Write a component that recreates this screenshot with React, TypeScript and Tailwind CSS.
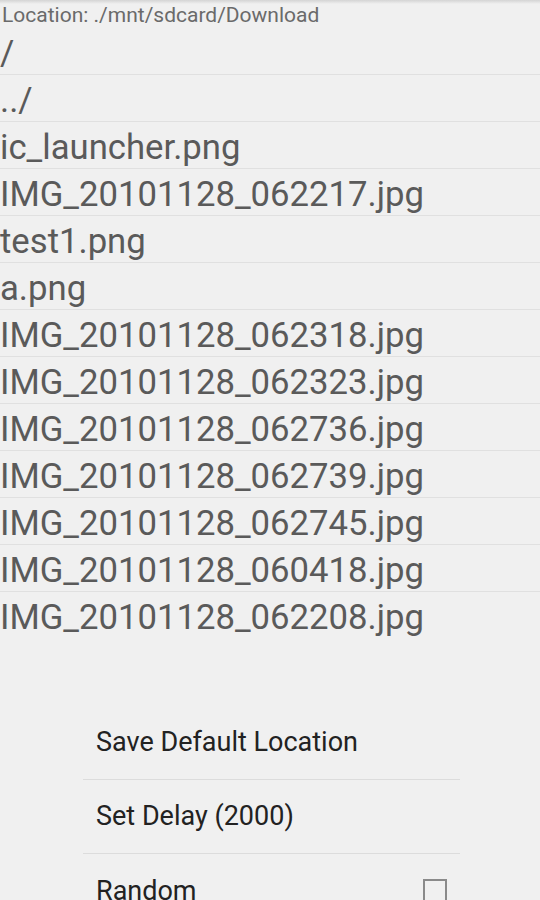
const FILES = [
  "/",
  "../",
  "ic_launcher.png",
  "IMG_20101128_062217.jpg",
  "test1.png",
  "a.png",
  "IMG_20101128_062318.jpg",
  "IMG_20101128_062323.jpg",
  "IMG_20101128_062736.jpg",
  "IMG_20101128_062739.jpg",
  "IMG_20101128_062745.jpg",
  "IMG_20101128_060418.jpg",
  "IMG_20101128_062208.jpg",
];

const MENU = [
  { label: "Save Default Location" },
  { label: "Set Delay (2000)" },
  { label: "Random", checkbox: true },
];

export default function App() {
  return (
    <div
      className="relative h-[900px] w-[540px] overflow-hidden bg-[#f0f0f0]"
      style={{ fontFamily: "Roboto, 'Noto Sans', sans-serif" }}
    >
      {/* status bar shadow */}
      <div className="h-[4px] bg-gradient-to-b from-[#d4d4d4] to-[#f0f0f0]" />

      {/* Location */}
      <div className="h-[24px] whitespace-nowrap pl-[2px] text-[21px] leading-[22px] text-[#6a6a6a]">
        Location: ./mnt/sdcard/Download
      </div>

      {/* File list */}
      <div className="flex flex-col">
        {FILES.map((f, i) => (
          <div
            key={f}
            className={
              "flex h-[47px] items-center whitespace-nowrap pt-[4px] text-[34.7px] text-[#5a5a5a] " +
              (i < FILES.length - 1 ? "border-b border-[#e0e0e0]" : "")
            }
          >
            {f}
          </div>
        ))}
      </div>

      {/* Options menu */}
      <div className="absolute left-[83px] top-[706px] w-[377px] bg-[#f0f0f0]">
        {MENU.map((m, i) => (
          <div
            key={m.label}
            className={
              "flex h-[74px] items-center justify-between pl-[13px] pr-[13px] text-[27px] text-[#222] " +
              (i < MENU.length - 1 ? "border-b border-[#dcdcdc]" : "")
            }
          >
            <span>{m.label}</span>
            {m.checkbox && (
              <span className="h-[24px] w-[24px] border-2 border-[#8a8a8a]" />
            )}
          </div>
        ))}
      </div>
    </div>
  );
}
